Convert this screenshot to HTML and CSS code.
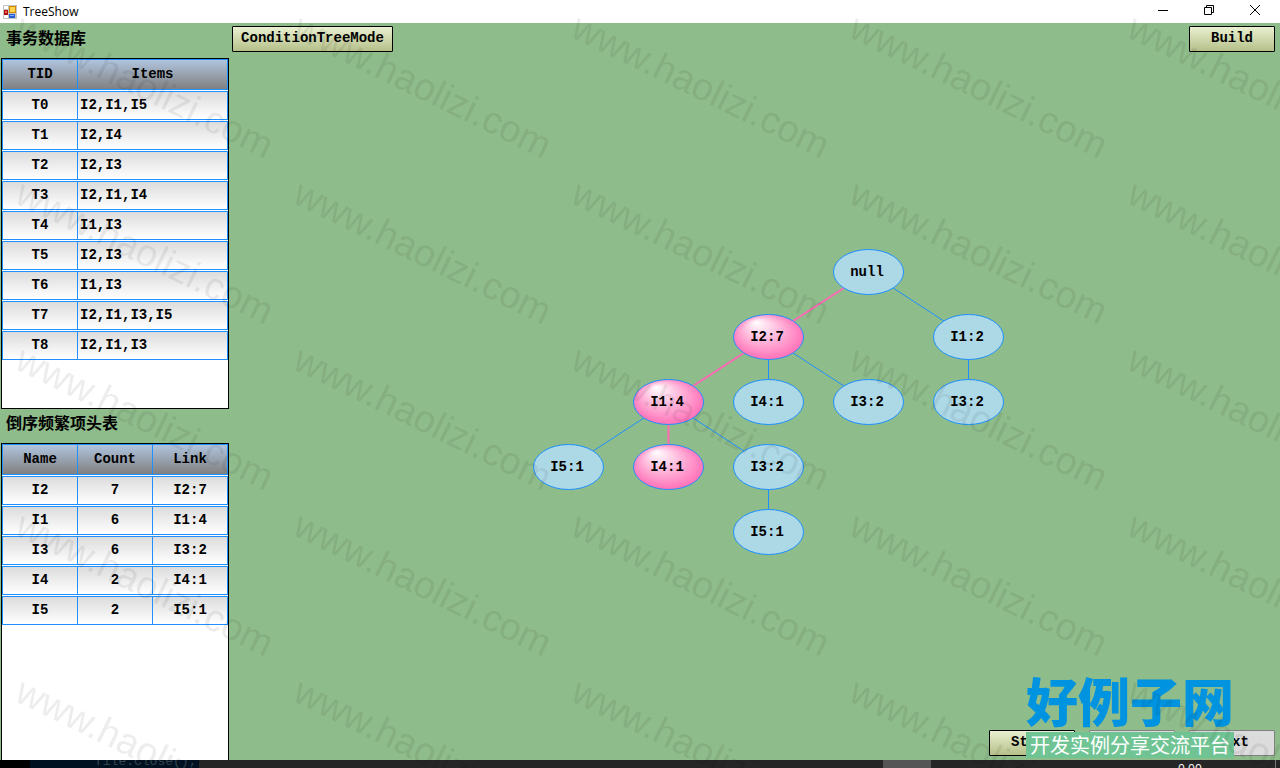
FILE: index.html
```
<!DOCTYPE html>
<html lang="zh-CN">
<head>
    <meta charset="UTF-8">
    <meta name="viewport" content="width=device-width, initial-scale=1.0">
    <title>TreeShow</title>
    <link rel="stylesheet" href="styles.css">
</head>
<body>
    <header class="titlebar">
        <svg class="app-icon" width="14" height="14" viewBox="0 0 14 14">
            <rect width="14" height="14" fill="#c4c4c4"/>
            <rect x="1" y="1" width="4" height="3" fill="#fff"/>
            <rect x="1" y="10" width="4" height="3" fill="#fff"/>
            <rect x="6" y="1" width="7" height="7" fill="#d08a00"/>
            <rect x="7" y="2" width="5" height="5" fill="#ffd34d"/>
            <rect x="1" y="5" width="4" height="5" fill="#b01010"/>
            <rect x="2" y="6" width="2" height="2" fill="#f06050"/>
            <rect x="6" y="9" width="6" height="4" fill="#2a5ad0"/>
            <rect x="7" y="10" width="4" height="1" fill="#7fb0ff"/>
        </svg>
        <span class="app-title">TreeShow</span>
        <div class="window-buttons">
            <button type="button" aria-label="Minimize">
                <svg width="12" height="12" viewBox="0 0 12 12"><path d="M1 6.500h10"/></svg>
            </button>
            <button type="button" aria-label="Restore">
                <svg width="12" height="12" viewBox="0 0 12 12"><path d="M1.500 3.500h7v7h-7zM3.500 3.500v-2h7v7h-2"/></svg>
            </button>
            <button type="button" aria-label="Close">
                <svg width="12" height="12" viewBox="0 0 12 12"><path d="M1 1l10 10M11 1L1 11"/></svg>
            </button>
        </div>
    </header>

    <main class="window">
        <aside class="sidebar">
            <h2>事务数据库</h2>
            <div class="list list-items">
                <table>
                    <thead>
                        <tr><th class="key">TID</th><th>Items</th></tr>
                    </thead>
                    <tbody>
                        <tr><td>T0</td><td>I2,I1,I5</td></tr>
                        <tr><td>T1</td><td>I2,I4</td></tr>
                        <tr><td>T2</td><td>I2,I3</td></tr>
                        <tr><td>T3</td><td>I2,I1,I4</td></tr>
                        <tr><td>T4</td><td>I1,I3</td></tr>
                        <tr><td>T5</td><td>I2,I3</td></tr>
                        <tr><td>T6</td><td>I1,I3</td></tr>
                        <tr><td>T7</td><td>I2,I1,I3,I5</td></tr>
                        <tr><td>T8</td><td>I2,I1,I3</td></tr>
                    </tbody>
                </table>
            </div>
            <h2>倒序频繁项头表</h2>
            <div class="list list-heads">
                <table>
                    <thead>
                        <tr><th class="key">Name</th><th>Count</th><th>Link</th></tr>
                    </thead>
                    <tbody>
                        <tr><td>I2</td><td>7</td><td>I2:7</td></tr>
                        <tr><td>I1</td><td>6</td><td>I1:4</td></tr>
                        <tr><td>I3</td><td>6</td><td>I3:2</td></tr>
                        <tr><td>I4</td><td>2</td><td>I4:1</td></tr>
                        <tr><td>I5</td><td>2</td><td>I5:1</td></tr>
                    </tbody>
                </table>
            </div>
        </aside>

        <section class="stage">
            <div class="toolbar">
                <button type="button" class="btn btn-mode">ConditionTreeMode</button>
                <button type="button" class="btn">Build</button>
            </div>

            <div class="canvas">
                <svg class="tree" width="472" height="308" viewBox="0 0 472 308">
                    <defs>
                        <radialGradient id="hot" cx="0.5" cy="0.5" r="0.55" fx="0.32" fy="0.16">
                            <stop offset="0" stop-color="#fff"/>
                            <stop offset="1" stop-color="#ff69b4"/>
                        </radialGradient>
                    </defs>
                    <g class="edges">
                        <path d="M336.500 24L436.500 89V154M236.500 89V154M236.500 89L336.500 154M136.500 154L36.500 219M136.500 154L236.500 219V284"/>
                        <path class="on" d="M336.500 24L236.500 89L136.500 154V219"/>
                    </g>
                    <g class="nodes">
                        <ellipse cx="336.500" cy="24" rx="35" ry="22.500"/>
                        <ellipse class="on" cx="236.500" cy="89" rx="35" ry="22.500"/>
                        <ellipse cx="436.500" cy="89" rx="35" ry="22.500"/>
                        <ellipse class="on" cx="136.500" cy="154" rx="35" ry="22.500"/>
                        <ellipse cx="236.500" cy="154" rx="35" ry="22.500"/>
                        <ellipse cx="336.500" cy="154" rx="35" ry="22.500"/>
                        <ellipse cx="436.500" cy="154" rx="35" ry="22.500"/>
                        <ellipse cx="36.500" cy="219" rx="35" ry="22.500"/>
                        <ellipse class="on" cx="136.500" cy="219" rx="35" ry="22.500"/>
                        <ellipse cx="236.500" cy="219" rx="35" ry="22.500"/>
                        <ellipse cx="236.500" cy="284" rx="35" ry="22.500"/>
                    </g>
                    <g class="labels">
                        <text x="335" y="28">null</text>
                        <text x="235" y="93">I2:7</text>
                        <text x="435" y="93">I1:2</text>
                        <text x="135" y="158">I1:4</text>
                        <text x="235" y="158">I4:1</text>
                        <text x="335" y="158">I3:2</text>
                        <text x="435" y="158">I3:2</text>
                        <text x="35" y="223">I5:1</text>
                        <text x="135" y="223">I4:1</text>
                        <text x="235" y="223">I3:2</text>
                        <text x="235" y="288">I5:1</text>
                    </g>
                </svg>
            </div>

            <div class="steps">
                <button type="button" class="btn">Start</button>
                <button type="button" class="btn" aria-label="Prev" disabled></button>
                <button type="button" class="btn" disabled>Next</button>
                <div class="site-logo">
                    <strong>好例子网</strong>
                    <span>开发实例分享交流平台</span>
                </div>
            </div>
        </section>
    </main>

    <footer class="behind">
        <span class="behind-code">file.Close();</span>
        <span class="behind-thumb"></span>
        <span class="behind-time">0.00</span>
    </footer>

    <svg class="watermark" aria-hidden="true">
        <defs>
            <pattern id="mark" x="6" y="10" width="278" height="166" patternUnits="userSpaceOnUse">
                <text transform="translate(7 26) rotate(26)">www.haolizi.com</text>
            </pattern>
        </defs>
        <rect width="100%" height="100%" fill="url(#mark)"/>
    </svg>
</body>
</html>
```

FILE: styles.css
```
* {
    box-sizing: border-box;
}

body {
    margin: 0;
    height: 100vh;
    display: flex;
    flex-direction: column;
    position: relative;
    overflow: hidden;
    background: #8fbc8b;
    color: #000;
    font: bold 14px "Liberation Mono", "Noto Sans CJK SC", monospace;
}

button {
    font: inherit;
    color: inherit;
    padding: 0;
}

/* title bar */
.titlebar {
    display: flex;
    align-items: center;
    flex: none;
    height: 23px;
    padding: 0 2px 0 3px;
    background: #fff;
}

.app-title {
    margin-left: 6px;
    font: 12px "Open Sans", sans-serif;
}

.window-buttons {
    display: flex;
    align-self: flex-start;
    margin-left: auto;
}

.window-buttons button {
    display: flex;
    align-items: center;
    justify-content: center;
    width: 46px;
    height: 20px;
    border: none;
    background: none;
}

.window-buttons path {
    fill: none;
    stroke: #000;
}

/* main window */
.window {
    display: flex;
    flex: 1;
    min-height: 0;
}

.sidebar {
    display: flex;
    flex-direction: column;
    flex: none;
    width: 229px;
    padding: 1px 0 0 1px;
}

h2 {
    flex: none;
    height: 34px;
    margin: 0;
    padding-left: 5px;
    font-size: 16px;
    line-height: 32px;
}

.list {
    overflow: hidden;
    border: 1px solid #000;
    background: #fff;
}

.list-items {
    flex: none;
    height: 351px;
}

.list-heads {
    flex: 1;
    border-bottom: none;
}

table {
    width: 100%;
    margin-top: -1px;
    table-layout: fixed;
    border-collapse: separate;
    border-spacing: 0 1px;
}

th, td {
    padding: 0 0 2px;
    border: 1px solid #1e90ff;
    border-left: none;
    text-align: center;
}

th:first-child, td:first-child {
    border-left: 1px solid #1e90ff;
}

th {
    height: 31px;
    background: linear-gradient(#b0c4de, #808080);
}

th.key {
    width: 76px;
}

td {
    height: 29px;
    background: linear-gradient(#dcdcdc, #fff);
}

.list-items td:last-child {
    padding-left: 2px;
    text-align: left;
}

/* right side */
.stage {
    display: flex;
    flex-direction: column;
    flex: 1;
    min-width: 0;
    padding: 3px 5px 4px 3px;
}

.toolbar {
    display: flex;
    justify-content: space-between;
}

.btn {
    width: 86px;
    height: 26px;
    padding-bottom: 2px;
    border: 1px solid #000;
    border-radius: 1px;
    background: linear-gradient(#eaf0d0, #b5c08a);
}

.btn-mode {
    width: 161px;
}

.btn:disabled {
    border-color: #808080;
    background: #dcdcdc;
}

.canvas {
    display: flex;
    align-items: center;
    justify-content: center;
    flex: 1;
    min-height: 0;
    padding: 22px 0 0 28px;
}

.edges path {
    fill: none;
    stroke: #1e90ff;
}

.edges .on {
    stroke: #ff69b4;
    stroke-width: 2px;
}

.nodes ellipse {
    fill: #add8e6;
    stroke: #1e90ff;
}

.nodes .on {
    fill: url(#hot);
}

.labels text {
    text-anchor: middle;
}

.steps {
    display: flex;
    justify-content: flex-end;
    gap: 14px;
    position: relative;
}

.site-logo {
    position: absolute;
    right: 41px;
    bottom: -2px;
    width: 208px;
    font-family: "Noto Sans CJK SC", sans-serif;
    text-align: center;
    white-space: nowrap;
}

.site-logo strong {
    display: block;
    padding-bottom: 4px;
    color: #0093e0;
    font-size: 52px;
    font-weight: 900;
    line-height: 56px;
}

.site-logo span {
    display: block;
    background: #70c494;
    color: #fff;
    font-size: 20px;
    font-weight: 400;
    line-height: 26px;
}

/* strip of the window lying underneath */
.behind {
    display: flex;
    flex: none;
    height: 8px;
    overflow: hidden;
    background: #262626;
    font-size: 13px;
    font-weight: 400;
    line-height: 4px;
}

.behind-code {
    width: 199px;
    padding-left: 95px;
    background: linear-gradient(to right, #000 30px, #001122 30px);
    color: #34424c;
}

.behind-thumb {
    width: 48px;
    margin-left: auto;
    background: #555;
}

.behind-time {
    width: 98px;
    margin: 0 4px 0 247px;
    padding-top: 3px;
    border-right: 1px solid #777;
    color: #fff;
    font: 12px/12px "Open Sans", sans-serif;
}

.watermark {
    position: absolute;
    inset: 0;
    width: 100%;
    height: 100%;
    pointer-events: none;
}

.watermark text {
    fill: rgba(0, 0, 0, 0.07);
    font: 38px "Liberation Sans", sans-serif;
}
```
